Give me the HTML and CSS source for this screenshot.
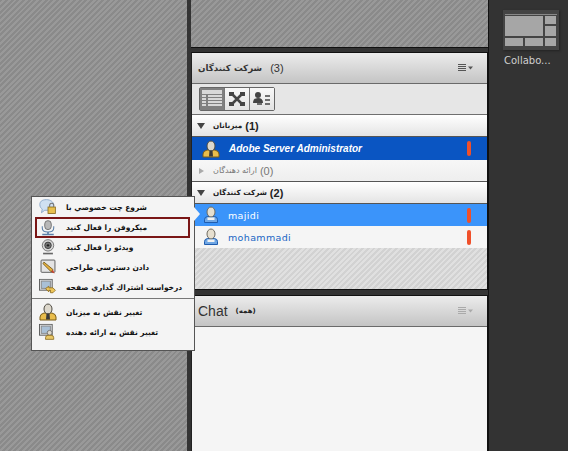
FILE: index.html
```html
<!DOCTYPE html>
<html lang="en">
<head>
    <meta charset="UTF-8">
    <title>Adobe Connect</title>
    <link rel="stylesheet" href="styles.css">
</head>
<body>
    <svg class="defs" width="0" height="0">
        <symbol id="user" viewBox="0 0 16 18">
            <path d="M1.500 16.500v-3q0-2.500 3-3h7q3 .5 3 3v3z" fill="#6fa6e4" stroke="#1f5cae"/>
            <ellipse cx="8" cy="6" rx="4" ry="5" fill="#e6dfcf" stroke="#6d6a60"/>
            <path d="M4.500 11.500h7v2.500h-7z" fill="#f2f2f2"/>
        </symbol>
        <symbol id="host" viewBox="0 0 18 18">
            <path d="M1 17v-3q0-3 4-4h8q4 1 4 4v3z" fill="#e9bd4c" stroke="#7a5c16"/>
            <ellipse cx="9" cy="6" rx="4" ry="5" fill="#ddd8cc" stroke="#4d4a42"/>
            <path d="M7.500 10.500h3l.5 6H7z" fill="#3a3a3a"/>
        </symbol>
        <symbol id="screen" viewBox="0 0 18 18">
            <rect x=".5" y=".5" width="14" height="12" fill="#dfe3e6" stroke="#555"/>
            <rect x="2.500" y="2.500" width="10" height="8" fill="#a9c0d6" stroke="#888"/>
        </symbol>
    </svg>

    <div class="app">
        <div class="stage hatch"></div>

        <div class="pods">
            <div class="pod-top hatch"></div>

            <section class="pod attendees">
                <header class="pod-head">
                    <span class="pod-title fa">شركت كنندگان</span>
                    <span class="pod-count">(3)</span>
                    <svg class="pod-menu" width="16" height="8" viewBox="0 0 16 8">
                        <path d="M0 .5h8M0 2.500h8M0 4.500h8M0 6.500h8" stroke="#555"/>
                        <path d="M10 2.500h5l-2.500 3z" fill="#555"/>
                    </svg>
                </header>
                <div class="toolbar">
                    <div class="tool-group">
                        <span class="tool active">
                            <svg width="24" height="22" viewBox="0 0 24 22">
                                <path d="M2 2h20v4H2z" fill="#555"/>
                                <path d="M2 8h4M2 11h4M2 14h4M2 17h4M8 8h14M8 11h14M8 14h14M8 17h14" stroke="#555" stroke-width="2"/>
                            </svg>
                        </span>
                        <span class="tool">
                            <svg width="24" height="22" viewBox="0 0 24 22">
                                <path d="M4 4h5v4H4zM15 4h5v4h-5zM4 14h5v4H4zM15 14h5v4h-5z" fill="#444"/>
                                <path d="M7 6l10 10M17 6L7 16" stroke="#444" stroke-width="2.500"/>
                            </svg>
                        </span>
                        <span class="tool">
                            <svg width="24" height="22" viewBox="0 0 24 22">
                                <circle cx="8" cy="7" r="3" fill="#444"/>
                                <path d="M3 15q0-5 5-5t5 5z" fill="#444"/>
                                <path d="M15 8h5M15 12h5M15 16h5M7 16h5" stroke="#444" stroke-width="1.500"/>
                            </svg>
                        </span>
                    </div>
                </div>

                <div class="group-row">
                    <span class="caret down"></span>
                    <span class="fa bold">ميزبانان</span> <b>(1)</b>
                </div>
                <div class="user-row is-host">
                    <svg class="row-icon" width="18" height="18"><use href="#host"/></svg>
                    <span class="user-name">Adobe Server Administrator</span>
                    <span class="status"></span>
                </div>
                <div class="group-row muted">
                    <span class="caret right"></span>
                    <span class="fa">ارائه دهندگان</span> <b>(0)</b>
                </div>
                <div class="group-row">
                    <span class="caret down"></span>
                    <span class="fa bold">شركت كنندگان</span> <b>(2)</b>
                </div>
                <div class="user-row is-selected">
                    <svg class="row-icon" width="16" height="18"><use href="#user"/></svg>
                    <span class="user-name">majidi</span>
                    <span class="status"></span>
                </div>
                <div class="user-row">
                    <svg class="row-icon" width="16" height="18"><use href="#user"/></svg>
                    <span class="user-name">mohammadi</span>
                    <span class="status"></span>
                </div>
                <div class="empty hatch-light"></div>
            </section>

            <section class="pod chat">
                <header class="pod-head">
                    <span class="chat-title">Chat</span>
                    <span class="chat-scope fa">(همه)</span>
                    <svg class="pod-menu" width="16" height="8" viewBox="0 0 16 8">
                        <path d="M0 .5h8M0 2.500h8M0 4.500h8M0 6.500h8" stroke="#aaa"/>
                        <path d="M10 2.500h5l-2.500 3z" fill="#aaa"/>
                    </svg>
                </header>
                <div class="chat-body"></div>
            </section>
        </div>

        <aside class="side">
            <div class="layout-thumb">
                <div class="thumb-bar"></div>
                <div class="thumb-grid">
                    <span class="thumb-main"></span>
                    <span></span>
                    <span></span>
                    <span></span>
                    <span></span>
                    <span></span>
                </div>
            </div>
            <div class="layout-name">Collabo...</div>
        </aside>
    </div>

    <div class="menu fa">
        <span class="menu-arrow"></span>
        <div class="menu-item">
            <svg width="18" height="18" viewBox="0 0 22 20">
                <path d="M9 1C3 1 1 4 1 7c0 3 1.500 4.500 3 5.500L3 17l4-3h3c5 0 8-3 8-6.500S14 1 9 1z" fill="#cfe0f2" stroke="#7f9fc4"/>
                <rect x="11" y="10" width="9" height="8" fill="#e8c04e" stroke="#86691e"/>
                <path d="M13 10V8a2.500 2.500 0 0 1 5 0v2" fill="none" stroke="#777" stroke-width="1.300"/>
            </svg>
            <span>شروع چت خصوصي با</span>
        </div>
        <div class="menu-item is-marked">
            <svg width="18" height="18" viewBox="0 0 22 20">
                <rect x="7" y="1" width="8" height="11" rx="4" fill="#b8b8b8" stroke="#666"/>
                <path d="M4 8v2q0 5 7 5t7-5V8" fill="none" stroke="#5b7fa8" stroke-width="1.300"/>
                <path d="M11 15v2M4 18h14" stroke="#5b7fa8" stroke-width="2"/>
            </svg>
            <span>ميكروفن را فعال كنيد</span>
        </div>
        <div class="menu-item">
            <svg width="18" height="18" viewBox="0 0 22 20">
                <circle cx="11" cy="8" r="7" fill="#d8d8d8" stroke="#666"/>
                <circle cx="11" cy="8" r="4" fill="#777" stroke="#333"/>
                <circle cx="11" cy="8" r="1.500" fill="#222"/>
                <path d="M5 17h12v2H5z" fill="#666"/>
            </svg>
            <span>ويدئو را فعال كنيد</span>
        </div>
        <div class="menu-item">
            <svg width="18" height="18" viewBox="0 0 22 20">
                <rect x="2.500" y="1.500" width="17" height="15" rx="1" fill="#e4e4e4" stroke="#444"/>
                <path d="M6 4l11 9-2 3L5 6z" fill="#e8b23e" stroke="#6b5216"/>
                <path d="M15 16l4 2-2-5z" fill="#c9402a"/>
            </svg>
            <span>دادن دسترسي طراحي</span>
        </div>
        <div class="menu-item">
            <svg width="18" height="18" viewBox="0 0 22 20">
                <use href="#screen" width="20" height="20"/>
                <path d="M8 12l4-3v2h5l3 3-3 3h-3v-3h-2v2z" fill="#eec65a" stroke="#8a6a1c"/>
            </svg>
            <span>درخواست اشتراك گذاري صفحه</span>
        </div>
        <div class="menu-line"></div>
        <div class="menu-item">
            <svg width="18" height="18"><use href="#host"/></svg>
            <span>تغيير نقش به ميزبان</span>
        </div>
        <div class="menu-item">
            <svg width="18" height="18" viewBox="0 0 22 20">
                <use href="#screen" width="20" height="20"/>
                <circle cx="13" cy="11" r="3" fill="#ddd8cc" stroke="#666"/>
                <path d="M8 19v-2q0-3 3-3h4q3 0 3 3v2z" fill="#e9c766" stroke="#8a6a1c"/>
            </svg>
            <span>تغيير نقش به ارائه دهنده</span>
        </div>
    </div>
</body>
</html>
```

FILE: styles.css
```css
html, body {
    margin: 0;
    height: 100%;
    overflow: hidden;
}
body {
    background: #333333;
    font-family: "Liberation Sans", Arial, sans-serif;
    font-size: 11px;
    color: #222;
}
.defs {
    display: block;
    height: 0;
}
.fa {
    font-family: "DejaVu Sans", "Noto Sans", sans-serif;
}
.bold {
    font-weight: bold;
}
.hatch {
    background: repeating-linear-gradient(135deg, #8a8a8a 0, #8a8a8a 2px, #999 2px, #999 4px);
}
.hatch-light {
    background: repeating-linear-gradient(135deg, #d2d2d2 0, #d2d2d2 2px, #e0e0e0 2px, #e0e0e0 4px);
}

.app {
    display: grid;
    grid-template-columns: 187px 301px 80px;
    height: 451px;
}

.pods {
    display: flex;
    flex-direction: column;
    gap: 4px;
    padding: 0 0 0 4px;
    background: #333;
}
.pod-top {
    height: 48px;
    border-bottom: 1px solid #111;
    box-sizing: border-box;
    flex: none;
}
.pod {
    border: 1px solid #111;
    border-left-color: #222;
    border-bottom: 0;
    box-sizing: border-box;
    background: #f5f5f5;
}
.attendees {
    height: 238px;
    flex: none;
    border-bottom: 1px solid #111;
}
.chat {
    flex: 1;
    display: flex;
    flex-direction: column;
    margin-top: 1px;
}

.pod-head {
    height: 30px;
    display: flex;
    align-items: center;
    padding: 0 13px 0 6px;
    gap: 8px;
    background: linear-gradient(#ececec, #c4c4c4);
    border-bottom: 1px solid #6a6a6a;
    flex: none;
}
.pod-title {
    font-size: 8.7px;
    font-weight: bold;
    color: #333;
}
.pod-count {
    font-size: 11px;
    color: #333;
}
.pod-menu {
    margin-left: auto;
}
.chat-title {
    font-size: 14px;
    color: #333;
}
.chat-scope {
    font-size: 7px;
    font-weight: bold;
}
.chat-body {
    flex: 1;
    background: #f5f5f5;
}

.toolbar {
    height: 30px;
    display: flex;
    align-items: center;
    padding-left: 7px;
    background: #e6e6e6;
    border-bottom: 1px solid #6f6f6f;
}
.tool-group {
    display: flex;
    border: 1px solid #666;
    border-radius: 2px;
    height: 22px;
}
.tool {
    width: 24px;
    height: 22px;
    background: linear-gradient(#f8f8f8, #e2e2e2);
    border-left: 1px solid #777;
}
.tool:first-child {
    border-left: 0;
}
.tool.active {
    background: #808080;
}
.tool.active path {
    stroke: #d8d8d8;
}
.tool.active path:first-child {
    fill: #d8d8d8;
    stroke: none;
}

.group-row {
    height: 22px;
    display: flex;
    align-items: center;
    gap: 3px;
    padding-left: 5px;
    background: linear-gradient(#ffffff, #e4e4e4);
    border-bottom: 1px solid #555;
    box-sizing: border-box;
    font-size: 7.3px;
}
.group-row b {
    font-family: "Liberation Sans", sans-serif;
    font-size: 11px;
}
.group-row.muted {
    color: #777;
    background: linear-gradient(#f7f7f7, #eeeeee);
    font-size: 8px;
}
.group-row.muted b {
    font-weight: normal;
}
.caret {
    width: 0;
    height: 0;
    margin-right: 5px;
}
.caret.down {
    border: 4px solid transparent;
    border-top: 6px solid #444;
    border-bottom: 0;
}
.caret.right {
    border: 3.5px solid transparent;
    border-left: 5px solid #aaa;
    border-right: 0;
    margin-left: 2px;
    margin-right: 6px;
}

.user-row {
    height: 22px;
    display: flex;
    align-items: center;
    padding: 0 16px 0 11px;
    background: #f5f5f5;
    color: #1a66c4;
    font-family: "DejaVu Sans", sans-serif;
    font-size: 9.5px;
    letter-spacing: .35px;
}
.row-icon {
    margin-right: 9px;
    flex: none;
}
.user-name {
    flex: 1;
}
.status {
    width: 4px;
    height: 15px;
    border-radius: 2px;
    background: #f0502a;
}
.is-host {
    height: 23px;
    background: #0a55c2;
    color: #fff;
    font-family: "Liberation Sans", sans-serif;
    font-weight: bold;
    font-style: italic;
    font-size: 10px;
    letter-spacing: 0;
    padding-left: 10px;
}
.is-selected {
    background: #3b94fa;
    color: #fff;
}

.empty {
    height: 41px;
}

.side {
    position: relative;
    padding: 10px 0 0 14px;
    color: #cfcfcf;
    background: #333;
    border-left: 1px solid #111;
}
.layout-thumb {
    width: 56px;
    height: 40px;
    background: #444;
    padding: 1px 2px;
    box-sizing: border-box;
    box-shadow: 1px 1px 2px #222;
}
.thumb-bar {
    height: 3px;
    border-bottom: 1px solid #888;
}
.thumb-grid {
    display: grid;
    grid-template-columns: 18px 18px 11px;
    grid-template-rows: 8px 10px 8px;
    gap: 2px;
    margin-top: 1px;
}
.thumb-grid span {
    background: #a6a6a6;
}
.thumb-main {
    grid-column: 1 / 3;
    grid-row: 1 / 3;
}
.layout-name {
    margin-top: 5px;
    margin-left: 1px;
    font-family: "DejaVu Sans", sans-serif;
    font-size: 10px;
    white-space: nowrap;
}

.menu {
    position: absolute;
    left: 31px;
    top: 196px;
    width: 164px;
    height: 155px;
    box-sizing: border-box;
    background: #f4f4f4;
    border: 1px solid #555;
    font-size: 7.5px;
    font-weight: bold;
    color: #111;
}
.menu-arrow {
    position: absolute;
    left: 162px;
    top: 10px;
    width: 0;
    height: 0;
    border: 7px solid transparent;
    border-left: 6px solid #f4f4f4;
    border-right: 0;
}
.menu-item {
    height: 20px;
    display: flex;
    align-items: center;
    gap: 9px;
    padding-left: 7px;
    box-sizing: border-box;
    white-space: nowrap;
}
.menu-item svg {
    flex: none;
}
.is-marked {
    height: 21px;
    margin: 0 4px -1px 3px;
    padding-left: 2px;
    border: 2px solid #7a1616;
}
.menu-line {
    height: 0;
    margin: 1px 0 3px;
    border-top: 1px solid #777;
}
```
